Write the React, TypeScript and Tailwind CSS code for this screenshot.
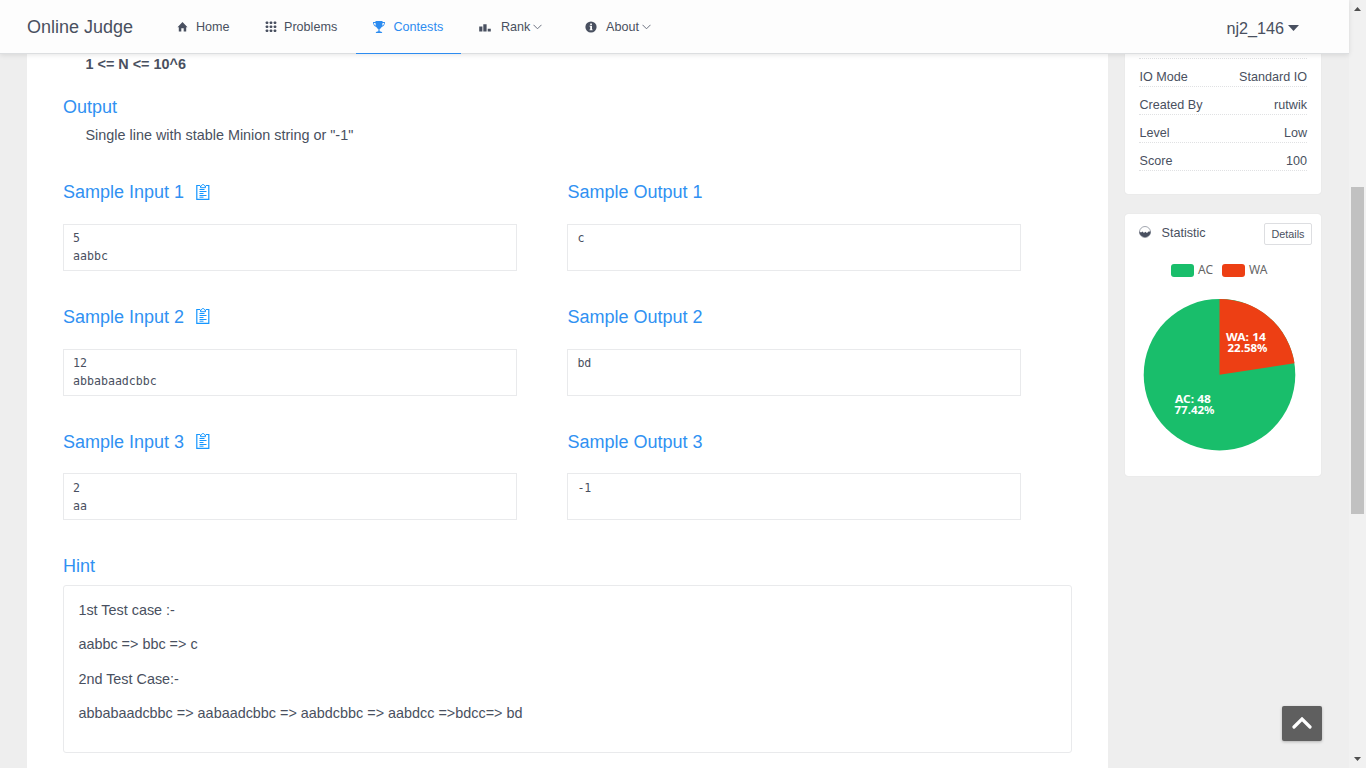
import React from 'react';

function Chevron() {
  return (
    <svg className="ml-[3px] mt-px h-[6px] w-[9px]" viewBox="0 0 9 6" fill="none" stroke="#6d7280" strokeWidth="1">
      <path d="M.5 .8 L4.5 4.8 L8.5 .8" />
    </svg>
  );
}

const HomeIcon = () => (
  <svg className="h-3 w-3" viewBox="0 0 12 12" fill="currentColor">
    <path d="M5.500 1 L10.500 6.200 H9.200 V10.500 H6.700 V7.300 H4.300 V10.500 H1.800 V6.200 H.5 Z" />
  </svg>
);

const GridIcon = () => (
  <svg className="h-3 w-3" viewBox="0 0 12 12" fill="currentColor">
    {[0.5, 4.5, 8.5].map((y) => [1, 5, 9].map((x) => <rect key={`${x}-${y}`} x={x - 0.3} y={y} width="2.6" height="2.4" rx=".7" />))}
  </svg>
);

const TrophyIcon = () => (
  <svg className="h-3 w-3" viewBox="0 0 12 12" fill="currentColor">
    <path d="M2.500 0h7v1H12c0 2.800-1.200 4.300-3.300 4.900C8 7.100 7.200 7.800 6.600 8V10.300C8 10.400 9 10.900 9.300 12H2.700C3 10.900 4 10.400 5.400 10.300V8C4.800 7.800 4 7.100 3.300 5.900C1.200 5.300 0 3.800 0 1h2.500zM.9 1.900c.2 1.500.8 2.300 1.900 2.700L2.500 1.900zM11.100 1.900H9.500L9.200 4.600C10.300 4.200 10.900 3.400 11.100 1.900z" fillRule="evenodd" />
  </svg>
);

const RankIcon = () => (
  <svg className="ml-px h-3 w-3" viewBox="0 0 12 12" fill="currentColor">
    <path d="M.2 5.500h3.200v5H.2zM4.300 3.200h3.300v7.300H4.300zM8.700 7.700h3.100v2.800H8.700z" />
  </svg>
);

const InfoIcon = () => (
  <svg className="ml-[0.500px] h-3 w-3" viewBox="0 0 12 12">
    <circle cx="6" cy="6" r="5.600" fill="currentColor" />
    <path d="M5.200 2.500h1.700v1.500H5.200zM4.500 4.800H7V8.400H7.700V9.200H4.500V8.400H5.200V5.500H4.500z" fill="#fff" />
  </svg>
);

const ClipboardIcon = () => (
  <svg className="mb-[2px] ml-[12px] h-4 w-[14px]" viewBox="0 0 14 16" fill="none" stroke="#1596ff" strokeWidth="1">
    <path d="M4 1.500H.8V15.400H12.800V1.500H10" strokeWidth="1.200" />
    <path d="M4.500 3.700V2H5.500C5.500 0 8.500 0 8.500 2H9.500V3.700Z" />
    <path d="M3.500 5.500H8.500M3.500 7.500H10.500M3.500 9.500H7.500M3.500 11.500H10.500M3.500 13.200H7.500" />
  </svg>
);

const navItems = [
  { label: 'Home', icon: <HomeIcon />, width: 'w-[88px]', gap: 'gap-[7px]' },
  { label: 'Problems', icon: <GridIcon />, width: 'w-[108px]', gap: 'gap-[7px]' },
  { label: 'Contests', icon: <TrophyIcon />, width: 'w-[105px]', gap: 'gap-[8.500px]', active: true },
  { label: 'Rank', icon: <RankIcon />, width: 'w-[106px]', gap: 'gap-[10px]', menu: true },
  { label: 'About', icon: <InfoIcon />, width: 'w-[105px]', gap: 'gap-[9.500px]', menu: true },
];

const samples = [
  { input: '5\naabbc', output: 'c' },
  { input: '12\nabbabaadcbbc', output: 'bd' },
  { input: '2\naa', output: '-1' },
];

const info = [
  ['IO Mode', 'Standard IO'],
  ['Created By', 'rutwik'],
  ['Level', 'Low'],
  ['Score', '100'],
];

const hints = [
  '1st Test case :-',
  'aabbc => bbc => c',
  '2nd Test Case:-',
  'abbabaadcbbc => aabaadcbbc => aabdcbbc => aabdcc =>bdcc=> bd',
];

function Header() {
  return (
    <header className="relative z-10 flex h-[54px] shrink-0 border-b border-[#dcdee0] bg-[#fdfdfd] pl-[27px] shadow-[0_1px_5px_rgba(0,0,0,0.1)]">
      <div className="w-[133px] pt-[14px] text-[18px] leading-[27px]">Online Judge</div>
      <nav className="flex">
        {navItems.map((item) => (
          <div
            key={item.label}
            className={`-mb-px flex h-[54px] items-center border-b pl-[17px] pt-px text-[12.6px] ${item.width} ${item.gap} ${
              item.active ? 'border-[#2d8cf0] text-[#2d8cf0]' : 'border-transparent'
            }`}
          >
            <span className="-mt-px">{item.icon}</span>
            <span className="flex items-center">
              {item.label}
              {item.menu && <Chevron />}
            </span>
          </div>
        ))}
      </nav>
      <div className="ml-auto flex h-[56px] items-center gap-[5px] pr-[50px] text-[16.2px]">
        <span className="translate-x-px">nj2_146</span>
        <svg className="h-[6px] w-[11px]" viewBox="0 0 11 6" fill="currentColor">
          <path d="M0 0H11L5.500 6Z" />
        </svg>
      </div>
    </header>
  );
}

function SampleBox({ title, text, copy }: { title: string; text: string; copy?: boolean }) {
  return (
    <div className="w-[454px]">
      <h2 className="flex h-[27px] items-center text-[18px] text-[#3091f2]">
        {title}
        {copy && <ClipboardIcon />}
      </h2>
      <pre className="mt-[17.700px] h-[47px] border border-[#e9eaec] px-[9px] pt-[4.600px] font-['DejaVu_Sans_Mono',monospace] text-[11.6px] leading-[18px]">
        {text}
      </pre>
    </div>
  );
}

function Problem() {
  return (
    <main className="w-[1081px] bg-white px-9 text-[14.4px]">
      <p className="h-[21px] pl-[22.500px] font-bold leading-[21px]">1 &lt;= N &lt;= 10^6</p>
      <h2 className="mt-[19px] text-[18px] leading-[27px] text-[#3091f2]">Output</h2>
      <p className="mt-[4px] h-[21px] pl-[22.500px] leading-[21px]">Single line with stable Minion string or "-1"</p>
      <div className="mt-[33.100px]">
        {samples.map((s, i) => (
          <div key={s.input} className="flex h-[124.750px] gap-[50.400px]">
            <SampleBox title={`Sample Input ${i + 1}`} text={s.input} copy />
            <SampleBox title={`Sample Output ${i + 1}`} text={s.output} />
          </div>
        ))}
      </div>
      <h2 className="text-[18px] leading-[27px] text-[#3091f2]">Hint</h2>
      <div className="mt-[4.700px] h-[168px] rounded-[3px] border border-[#e9eaec] px-[14.400px] pt-[14px]">
        {hints.map((h) => (
          <p key={h} className="mb-[13px] leading-[21.400px]">{h}</p>
        ))}
      </div>
    </main>
  );
}

function Pie() {
  return (
    <svg className="h-[210px] w-[190px]" viewBox="1125 252 190 210" fontFamily="'Noto Sans', sans-serif" fontSize="11">
      <g fontSize="12" fill="#666">
        <rect x="1171" y="264" width="23" height="13" rx="3" fill="#19be6b" />
        <text x="1198" y="274">AC</text>
        <rect x="1222" y="264" width="23" height="13" rx="3" fill="#ed3f14" />
        <text x="1249" y="274">WA</text>
      </g>
      <circle cx="1219.500" cy="374.700" r="75.800" fill="#19be6b" />
      <path d="M1219.500 374.700V298.900A75.800 75.800 0 0 1 1294.500 363.200Z" fill="#ed3f14" />
      <g fill="#fff" fontWeight="700" textAnchor="middle">
        <text x="1246" y="341" textLength="40" lengthAdjust="spacingAndGlyphs">WA: 14</text>
        <text x="1247.500" y="352" textLength="40" lengthAdjust="spacingAndGlyphs">22.58%</text>
        <text x="1193" y="403" textLength="36" lengthAdjust="spacingAndGlyphs">AC: 48</text>
        <text x="1194.500" y="414" textLength="40" lengthAdjust="spacingAndGlyphs">77.42%</text>
      </g>
    </svg>
  );
}

function Sidebar() {
  return (
    <aside className="ml-[17px] w-[196px] text-[12.6px]">
      <section className="h-[140px] rounded-b-[3px] bg-white px-[14px] shadow-[0_0_1px_rgba(0,0,0,0.15)]">
        <div className="h-[5px] border-b border-dotted border-[#e0e1e3]" />
        {info.map(([name, value]) => (
          <div key={name} className="flex h-[28px] justify-between border-b border-dotted border-[#e0e1e3] pl-[0.500px] pt-[9px] leading-[18px]">
            <span>{name}</span>
            <span>{value}</span>
          </div>
        ))}
      </section>
      <section className="mt-5 h-[262px] rounded-[3px] bg-white shadow-[0_0_1px_rgba(0,0,0,0.15)]">
        <div className="flex h-[38px] items-center pl-[14px] pr-[9px]">
          <svg className="mb-[2px] h-3 w-3" viewBox="0 0 12 12">
            <circle cx="6" cy="6" r="5.500" fill="#fff" stroke="#8a8f9a" strokeWidth=".8" />
            <path d="M.3 5.500L2 6.500L3.500 5.500L5 7L6.200 5.800L8 7L9.500 5.500L11.700 5.500A5.700 5.700 0 0 1 .3 5.500Z" fill="#495060" />
          </svg>
          <span className="ml-[10.500px]">Statistic</span>
          <button className="ml-auto mt-px h-[22px] w-[48px] rounded-[2px] border border-[#dddee1] pt-px text-[10.800px]">Details</button>
        </div>
        <Pie />
      </section>
    </aside>
  );
}

function Scrollbar() {
  return (
    <div className="flex w-[17px] shrink-0 flex-col items-center bg-[#f1f1f1]">
      <svg className="h-[17px] w-[17px]" viewBox="0 0 17 17"><path d="M5 11L8.500 7L12 11Z" fill="#505050" /></svg>
      <div className="mt-[170px] h-[327px] w-[13px] bg-[#c1c1c1]" />
      <svg className="mt-auto h-[17px] w-[17px]" viewBox="0 0 17 17"><path d="M5 6L8.500 10L12 6Z" fill="#505050" /></svg>
    </div>
  );
}

export default function App() {
  return (
    <div className="relative flex h-[768px] w-[1366px] overflow-hidden bg-[#eee] font-['Liberation_Sans',Arial,sans-serif] text-[#495060]">
      <div className="flex min-w-0 flex-1 flex-col">
        <Header />
        <div className="flex min-h-0 flex-1 pl-[27px]">
          <Problem />
          <Sidebar />
        </div>
      </div>
      <Scrollbar />
      <button className="absolute left-[1282px] top-[706px] flex h-[35px] w-[40px] items-center justify-center rounded-[2px] bg-[#5f5f5f] shadow-[0_1px_3px_rgba(0,0,0,0.25)]">
        <svg className="mb-[2px] h-[12px] w-[20px]" viewBox="0 0 20 12" fill="none" stroke="#fff" strokeWidth="3.200" strokeLinecap="round">
          <path d="M2 10L10 2L18 10" />
        </svg>
      </button>
    </div>
  );
}
